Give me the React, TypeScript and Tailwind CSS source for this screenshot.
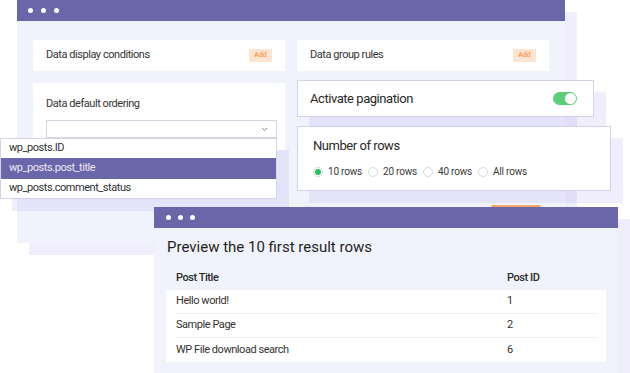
import React from "react";

const Dots = ({ gap }: { gap: string }) => (
  <div className={`flex items-center ${gap}`}>
    <span className="block w-[5px] h-[5px] rounded-full bg-white" />
    <span className="block w-[5px] h-[5px] rounded-full bg-white" />
    <span className="block w-[5px] h-[5px] rounded-full bg-white" />
  </div>
);

const AddBadge = () => (
  <span className="flex items-center justify-center w-[23px] h-[13px] bg-[#fde4d0] text-[#f5a05c] text-[7px] font-semibold leading-none">
    Add
  </span>
);

const Radio = ({ checked, label }: { checked?: boolean; label: string }) => (
  <div className="flex items-center gap-[5px]">
    <span className="flex items-center justify-center w-[10px] h-[10px] rounded-full border border-[#d8d8dc] bg-white">
      {checked && <span className="block w-[6px] h-[6px] rounded-full bg-[#22c55e]" />}
    </span>
    <span className="text-[10px] tracking-[-0.2px] text-[#3a3a3a] leading-none">{label}</span>
  </div>
);

export default function App() {
  const shadow = "shadow-[12px_12px_0_rgba(110,90,230,0.1)]";
  const small = "text-[11px] tracking-[-0.45px]";
  return (
    <div
      className="relative w-[630px] h-[373px] bg-white overflow-hidden"
      style={{ fontFamily: "Roboto, 'Noto Sans', sans-serif" }}
    >
      {/* Main window */}
      <div className={`absolute left-[17px] top-0 w-[548px] h-[243px] flex flex-col ${shadow}`}>
        <div className="h-[21px] bg-[#6a66aa] flex items-center pl-[11px]">
          <Dots gap="gap-[8px]" />
        </div>
        <div className="flex-1 bg-[#f1f3fc] px-4 pt-[19px] flex flex-col">
          <div className="grid grid-cols-2 gap-3">
            <div className="h-[31px] bg-white flex items-center justify-between pl-[13px] pr-[13px]">
              <span className={`${small} text-[#333]`}>Data display conditions</span>
              <AddBadge />
            </div>
            <div className="h-[31px] bg-white flex items-center justify-between pl-[13px] pr-[13px]">
              <span className={`${small} text-[#333]`}>Data group rules</span>
              <AddBadge />
            </div>
            <div className="h-[67px] bg-white flex flex-col pl-[13px] pr-[8px] pt-[14px]">
              <span className={`${small} text-[#333] leading-[14px]`}>Data default ordering</span>
              <div className="mt-[9px] h-[18px] border border-[#d6d6e2] bg-white flex items-center justify-end pr-[8px]">
                <svg width="7" height="5" viewBox="0 0 7 5" fill="none">
                  <path d="M1 1l2.5 2.5L6 1" stroke="#777" strokeWidth="0.9" />
                </svg>
              </div>
            </div>
            <div className="h-[67px]" />
          </div>
          <div className="flex justify-end pr-[8px] mt-[55px]">
            <div className="w-[50px] h-[20px] bg-[#f9a766] rounded-[2px]" />
          </div>
        </div>
      </div>

      {/* Dropdown */}
      <div className={`absolute left-0 top-[138px] w-[277px] flex flex-col bg-white border border-[#d6d3ec] ${shadow}`}>
        <div className={`h-[19px] flex items-center pl-[8px] ${small} text-[#2f2f2f]`}>wp_posts.ID</div>
        <div className={`h-[21px] flex items-center pl-[8px] ${small} text-[#ebe9f7] bg-[#6a66aa]`}>wp_posts.post_title</div>
        <div className={`h-[19px] flex items-center pl-[8px] ${small} text-[#2f2f2f]`}>wp_posts.comment_status</div>
      </div>

      {/* Pagination card */}
      <div className={`absolute left-[297px] top-[80px] w-[297px] h-[37px] bg-white border border-[#d5d1ea] flex items-center justify-between pl-[12px] pr-[16px] ${shadow}`}>
        <span className="text-[13px] tracking-[-0.45px] text-[#2a2a2a]">Activate pagination</span>
        <span className="w-[24px] h-[13px] rounded-full bg-[#5dcd77] flex items-center justify-end pr-[1px]">
          <span className="block w-[11px] h-[11px] rounded-full bg-white" />
        </span>
      </div>

      {/* Number of rows card */}
      <div className={`absolute left-[297px] top-[126px] w-[314px] h-[65px] bg-white border border-[#d5d1ea] flex flex-col pl-[15px] pt-[11px] ${shadow}`}>
        <span className="text-[13px] tracking-[-0.45px] text-[#2a2a2a] leading-[16px]">Number of rows</span>
        <div className="flex items-center gap-[6px] mt-[13px]">
          <Radio checked label="10 rows" />
          <Radio label="20 rows" />
          <Radio label="40 rows" />
          <Radio label="All rows" />
        </div>
      </div>

      {/* Preview window */}
      <div className={`absolute left-[154px] top-[207px] w-[464px] h-[166px] flex flex-col ${shadow}`}>
        <div className="h-[21px] bg-[#6a66aa] flex items-center pl-[12px]">
          <Dots gap="gap-[7px]" />
        </div>
        <div className="flex-1 bg-[#f1f3fc] flex flex-col px-[12px]">
          <div className="pl-[1px] pt-[10px] text-[15px] text-[#1f1f1f] leading-[18px]">
            Preview the 10 first result rows
          </div>
          <div className={`flex items-center h-[20px] mt-[12px] pl-[10px] ${small} font-medium text-[#2a2a2a]`}>
            <span className="w-[331px]">Post Title</span>
            <span>Post ID</span>
          </div>
          <div className="mt-[2px] bg-white flex flex-col">
            {[
              ["Hello world!", "1"],
              ["Sample Page", "2"],
              ["WP File download search", "6"],
            ].map(([t, id], i) => (
              <div key={i} className="mx-[9px]">
                <div className={`h-[24px] flex items-center pl-[1px] ${small} text-[#333] ${i < 2 ? "border-b border-[#eeeef2]" : ""}`}>
                  <span className="w-[331px]">{t}</span>
                  <span>{id}</span>
                </div>
              </div>
            ))}
          </div>
        </div>
      </div>
    </div>
  );
}
